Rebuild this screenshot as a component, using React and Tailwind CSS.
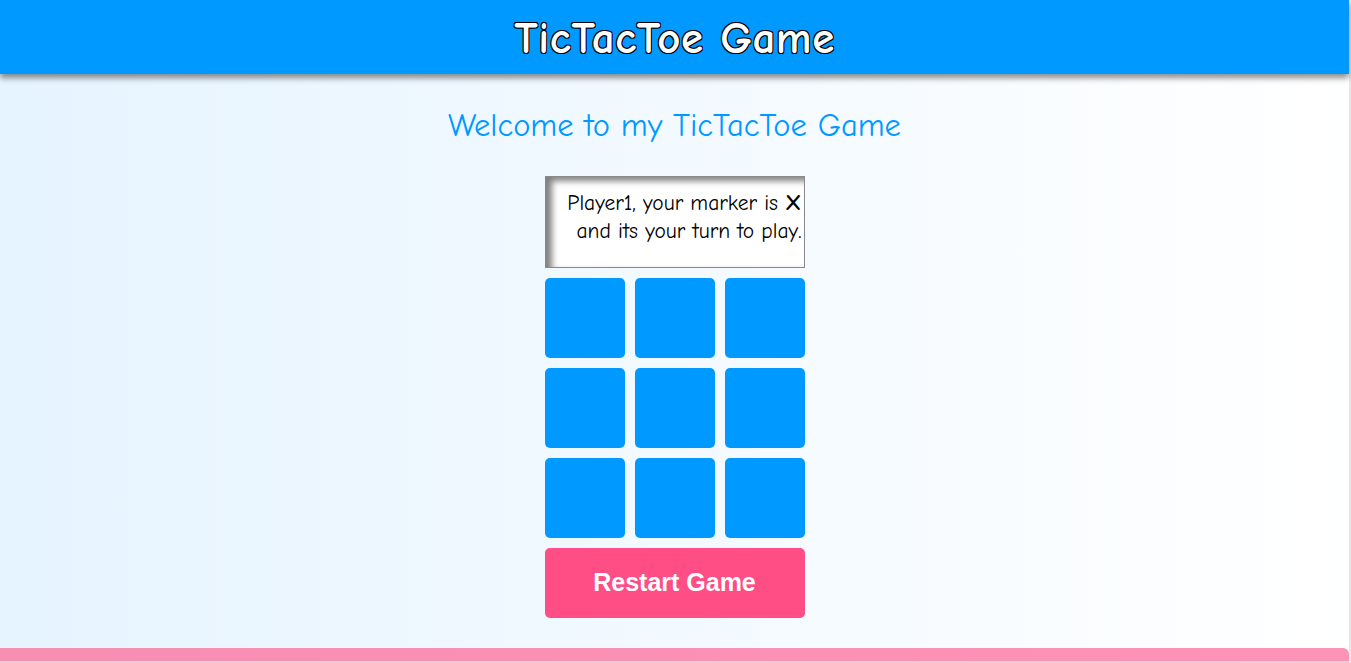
import React from "react";

const comic = { fontFamily: '"Comic Sans MS", "Comic Neue", "Noto Sans", sans-serif' };

export default function App() {
  return (
    <div className="min-h-[663px] w-full flex bg-[linear-gradient(90deg,#e6f4ff_0%,#ffffff_100%)]" style={comic}>
      <div className="flex-1 flex flex-col">
        <header className="h-[74px] bg-[#0099ff] flex items-center justify-center shadow-[0_4px_6px_rgba(0,0,0,0.45)] relative z-10">
          <h1 className="text-white text-[45px] font-bold leading-none tracking-[0.5px] mt-[2px] [text-shadow:-1px_-1px_0_#000,1px_-1px_0_#000,-1px_1px_0_#000,1px_1px_0_#000]">
            TicTacToe Game
          </h1>
        </header>
        <main className="flex flex-col items-center flex-1">
          <h2 className="text-[#0099ff] text-[32.5px] leading-none mt-[36px]">Welcome to my TicTacToe Game</h2>
          <div className="mt-[33px] w-[260px] h-[92px] bg-white border border-[#8a8a8a] shadow-[inset_6px_4px_6px_rgba(0,0,0,0.5)] flex flex-col items-end pr-[2px] pt-[12px] text-[21.5px] leading-[28px] text-black">
            <div className="whitespace-nowrap">Player1, your marker is <span className="font-bold text-[23px]">X</span></div>
            <div className="whitespace-nowrap">and its your turn to play.</div>
          </div>
          <div className="mt-[10px] grid grid-cols-[repeat(3,80px)] gap-[10px]">
            {Array.from({ length: 9 }).map((_, i) => (
              <button key={i} className="w-[80px] h-[80px] rounded-[5px] bg-[#0099ff]" />
            ))}
          </div>
          <button className="mt-[10px] w-[260px] h-[70px] rounded-[5px] bg-[#ff4d85] text-white text-[25px] font-bold" style={{ fontFamily: '"Liberation Sans", Arial, sans-serif' }}>
            Restart Game
          </button>
        </main>
        <div className="h-[13px] mt-[30px] bg-[linear-gradient(90deg,#f78fb3,#fd93b6)] rounded-tr-[6px]" />
        <div className="h-[2px] bg-[#dcd6d8]" />
      </div>
      <div className="w-[2px] bg-[#e8e8e8]" />
    </div>
  );
}
